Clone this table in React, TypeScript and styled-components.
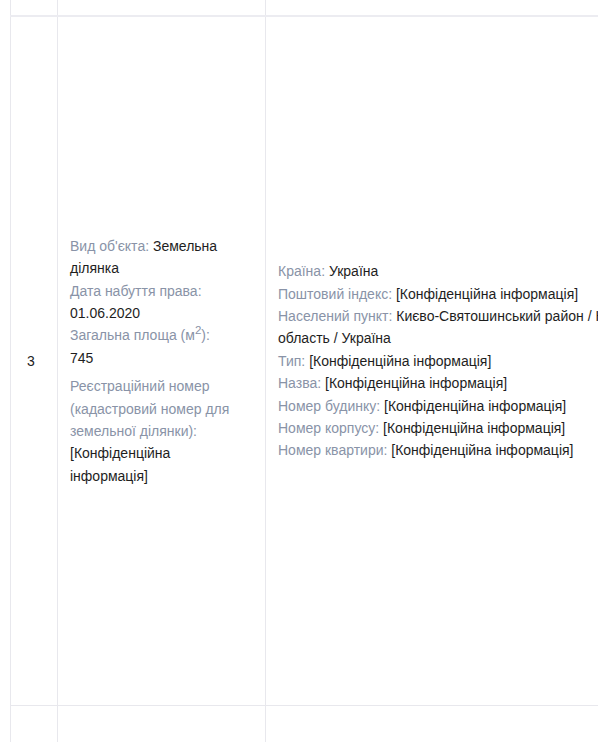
import React from "react";
import styled, { createGlobalStyle } from "styled-components";

const Global = createGlobalStyle`
  html, body { margin: 0; padding: 0; background: #fff; overflow: hidden; }
  body { font-family: "Liberation Sans", Arial, sans-serif; font-size: 14px; color: #222; }
`;

const Wrap = styled.div`
  padding-left: 10px;
  width: max-content;
`;

const Table = styled.table`
  border-collapse: collapse;
  table-layout: fixed;
  width: 684px;
`;

const Cell = styled.td<{ $h?: number }>`
  border-left: 1px solid #e8e8ed;
  border-right: 1px solid #e8e8ed;
  vertical-align: middle;
  padding: 0 12px;
  height: ${(p) => (p.$h ? `${p.$h}px` : "auto")};
  line-height: 22.4px;
`;

const MainRow = styled.tr`
  & > td {
    border-top: 2px solid #ececf1;
    border-bottom: 1px solid #e8e8ed;
  }
`;

const NumCell = styled(Cell)`
  padding-left: 16px;
  padding-right: 8px;
`;

const ObjectCell = styled(Cell)`
  padding-right: 34px;
`;

const Item = styled.div<{ $gap?: number }>`
  margin-top: ${(p) => p.$gap ?? 0}px;
`;

const Label = styled.span`
  color: #8993a7;
`;

const Value = styled.span`
  color: #1e1e1e;
`;

const Sup = styled.sup`
  font-size: 11.5px;
  line-height: 0;
  vertical-align: baseline;
  position: relative;
  top: -0.55em;
`;

export default function App() {
  return (
    <>
      <Global />
      <Wrap>
        <Table>
          <colgroup>
            <col style={{ width: 47 }} />
            <col style={{ width: 208 }} />
            <col style={{ width: 429 }} />
          </colgroup>
          <tbody>
            <tr>
              <Cell $h={15} />
              <Cell />
              <Cell />
            </tr>
            <MainRow>
              <NumCell $h={688}>3</NumCell>
              <ObjectCell>
                <Item>
                  <Label>Вид об'єкта:</Label> <Value>Земельна ділянка</Value>
                </Item>
                <Item>
                  <Label>Дата набуття права:</Label> <Value>01.06.2020</Value>
                </Item>
                <Item>
                  <Label>
                    Загальна площа (м<Sup>2</Sup>):
                  </Label>{" "}
                  <Value>745</Value>
                </Item>
                <Item $gap={6}>
                  <Label>Реєстраційний номер (кадастровий номер для земельної ділянки):</Label>{" "}
                  <Value>[Конфіденційна інформація]</Value>
                </Item>
              </ObjectCell>
              <Cell>
                <Item>
                  <Label>Країна:</Label> <Value>Україна</Value>
                </Item>
                <Item>
                  <Label>Поштовий індекс:</Label> <Value>[Конфіденційна інформація]</Value>
                </Item>
                <Item>
                  <Label>Населений пункт:</Label>{" "}
                  <Value>Києво-Святошинський район / Київська область / Україна</Value>
                </Item>
                <Item>
                  <Label>Тип:</Label> <Value>[Конфіденційна інформація]</Value>
                </Item>
                <Item>
                  <Label>Назва:</Label> <Value>[Конфіденційна інформація]</Value>
                </Item>
                <Item>
                  <Label>Номер будинку:</Label> <Value>[Конфіденційна інформація]</Value>
                </Item>
                <Item>
                  <Label>Номер корпусу:</Label> <Value>[Конфіденційна інформація]</Value>
                </Item>
                <Item>
                  <Label>Номер квартири:</Label> <Value>[Конфіденційна інформація]</Value>
                </Item>
              </Cell>
            </MainRow>
            <tr>
              <Cell $h={60} />
              <Cell />
              <Cell />
            </tr>
          </tbody>
        </Table>
      </Wrap>
    </>
  );
}
